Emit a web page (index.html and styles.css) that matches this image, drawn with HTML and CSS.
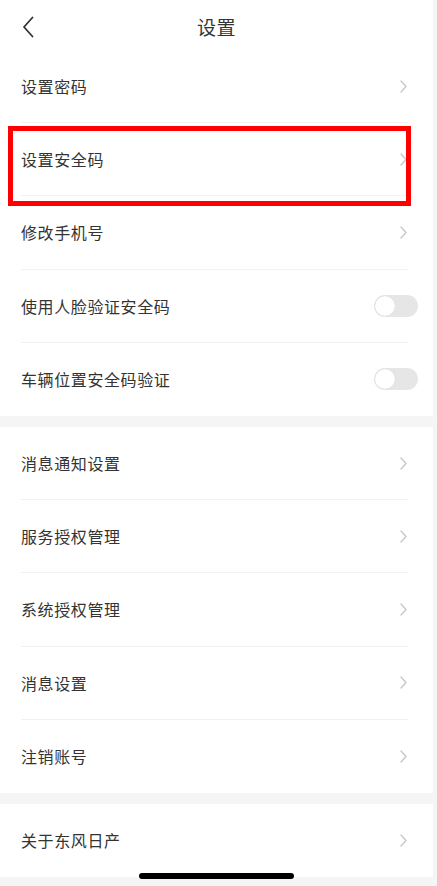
FILE: index.html
```html
<!DOCTYPE html>
<html lang="zh-CN">
<head>
<meta charset="utf-8">
<title>设置</title>
<link rel="stylesheet" href="styles.css">
</head>
<body>
<div class="page">
  <header class="header">
    <svg class="back" width="12" height="22" viewBox="0 0 12 22"><path d="M10.5 1.5 L2 11 L10.5 20.5" fill="none" stroke="#333" stroke-width="1.8" stroke-linecap="round" stroke-linejoin="round"/></svg>
    <h1 class="title">设置</h1>
  </header>

  <section class="group">
    <div class="row"><span class="label">设置密码</span><svg class="chev" width="7" height="13" viewBox="0 0 7 13"><path d="M1 1 L6 6.5 L1 12" fill="none" stroke="#c6c6c6" stroke-width="1.3" stroke-linecap="round" stroke-linejoin="round"/></svg></div>
    <div class="row highlighted"><span class="label">设置安全码</span><svg class="chev" width="7" height="13" viewBox="0 0 7 13"><path d="M1 1 L6 6.5 L1 12" fill="none" stroke="#c6c6c6" stroke-width="1.3" stroke-linecap="round" stroke-linejoin="round"/></svg><div class="redbox"></div></div>
    <div class="row"><span class="label">修改手机号</span><svg class="chev" width="7" height="13" viewBox="0 0 7 13"><path d="M1 1 L6 6.5 L1 12" fill="none" stroke="#c6c6c6" stroke-width="1.3" stroke-linecap="round" stroke-linejoin="round"/></svg></div>
    <div class="row"><span class="label">使用人脸验证安全码</span><span class="toggle"><span class="knob"></span></span></div>
    <div class="row last"><span class="label">车辆位置安全码验证</span><span class="toggle"><span class="knob"></span></span></div>
  </section>

  <section class="group">
    <div class="row"><span class="label">消息通知设置</span><svg class="chev" width="7" height="13" viewBox="0 0 7 13"><path d="M1 1 L6 6.5 L1 12" fill="none" stroke="#c6c6c6" stroke-width="1.3" stroke-linecap="round" stroke-linejoin="round"/></svg></div>
    <div class="row"><span class="label">服务授权管理</span><svg class="chev" width="7" height="13" viewBox="0 0 7 13"><path d="M1 1 L6 6.5 L1 12" fill="none" stroke="#c6c6c6" stroke-width="1.3" stroke-linecap="round" stroke-linejoin="round"/></svg></div>
    <div class="row"><span class="label">系统授权管理</span><svg class="chev" width="7" height="13" viewBox="0 0 7 13"><path d="M1 1 L6 6.5 L1 12" fill="none" stroke="#c6c6c6" stroke-width="1.3" stroke-linecap="round" stroke-linejoin="round"/></svg></div>
    <div class="row"><span class="label">消息设置</span><svg class="chev" width="7" height="13" viewBox="0 0 7 13"><path d="M1 1 L6 6.5 L1 12" fill="none" stroke="#c6c6c6" stroke-width="1.3" stroke-linecap="round" stroke-linejoin="round"/></svg></div>
    <div class="row last"><span class="label">注销账号</span><svg class="chev" width="7" height="13" viewBox="0 0 7 13"><path d="M1 1 L6 6.5 L1 12" fill="none" stroke="#c6c6c6" stroke-width="1.3" stroke-linecap="round" stroke-linejoin="round"/></svg></div>
  </section>

  <section class="group">
    <div class="row last"><span class="label">关于东风日产</span><svg class="chev" width="7" height="13" viewBox="0 0 7 13"><path d="M1 1 L6 6.5 L1 12" fill="none" stroke="#c6c6c6" stroke-width="1.3" stroke-linecap="round" stroke-linejoin="round"/></svg></div>
  </section>

  <div class="home-bar"><span class="indicator"></span></div>
</div>
</body>
</html>
```

FILE: styles.css
```css
html, body {
  margin: 0;
  padding: 0;
}
body {
  background: #f5f5f5;
  font-family: "Noto Sans CJK SC", "Noto Sans", sans-serif;
  color: #333;
  width: 437px;
  height: 886px;
  overflow: hidden;
}
.page {
  width: 433px;
  display: flex;
  flex-direction: column;
  gap: 11px;
  position: relative;
}
.header {
  height: 50px;
  background: #fff;
  display: flex;
  align-items: center;
  justify-content: center;
  position: relative;
  margin-bottom: -11px;
}
.back {
  position: absolute;
  left: 22px;
  top: 16px;
}
.title {
  margin: 0;
  font-size: 19px;
  font-weight: 400;
  color: #333;
  line-height: 1;
  padding-top: 2px;
  letter-spacing: 0.5px;
}
.group {
  background: #fff;
  padding: 0 25px 0 21px;
  display: flex;
  flex-direction: column;
}
.row {
  height: 73.2px;
  box-sizing: border-box;
  display: flex;
  align-items: center;
  justify-content: space-between;
  border-bottom: 1px solid #f2f2f2;
  position: relative;
}
.row.last {
  border-bottom: none;
}
.label {
  font-size: 16px;
  color: #333;
  letter-spacing: 0.6px;
}
.chev {
  margin-right: 1px;
}
.toggle {
  width: 44px;
  height: 22px;
  border-radius: 11px;
  background: #e6e6e6;
  display: flex;
  align-items: center;
  padding: 1px;
  box-sizing: border-box;
  margin-right: -10px;
}
.knob {
  width: 20px;
  height: 20px;
  border-radius: 50%;
  background: #fff;
  box-shadow: 0 0 1px rgba(0,0,0,0.15);
}
.redbox {
  position: absolute;
  left: -13px;
  right: -3px;
  top: 3px;
  height: 80px;
  box-sizing: border-box;
  border: 5.5px solid #f00;
}
.home-bar {
  height: 9px;
  background: #f5f5f5;
  position: relative;
  margin-top: -11px;
}
.indicator {
  position: absolute;
  left: 139px;
  top: -4px;
  width: 155px;
  height: 6px;
  border-radius: 3px;
  background: #000;
}
```
